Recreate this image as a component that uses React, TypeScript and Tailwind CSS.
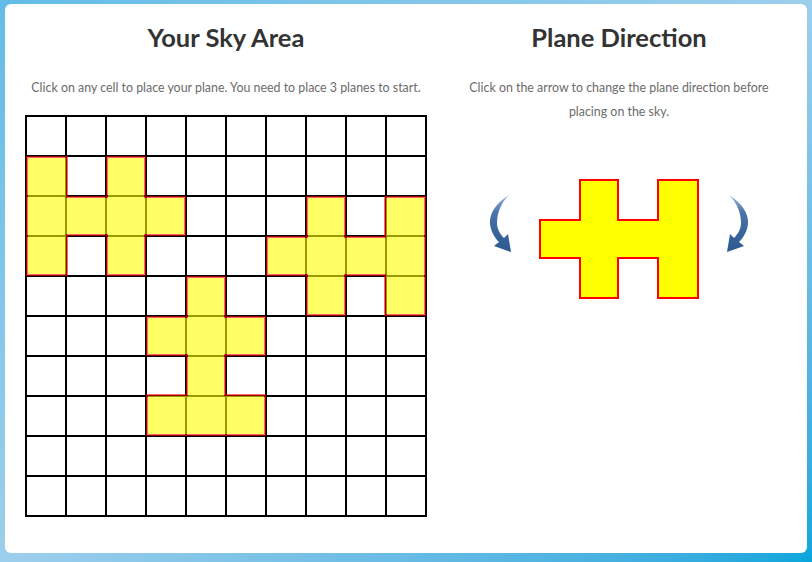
import React from 'react'

type Dir = 'left' | 'right' | 'up'

type Plane = { row: number; col: number; dir: Dir }

const planes: Plane[] = [
    { row: 1, col: 0, dir: 'right' },
    { row: 2, col: 6, dir: 'left' },
    { row: 4, col: 3, dir: 'up' },
]

// nose pointing left, 4 cells wide x 3 cells tall
const sidePoints = '1,41 41,41 41,1 79,1 79,41 119,41 119,1 159,1 159,119 119,119 119,79 79,79 79,119 41,119 41,79 1,79'
// nose pointing up, 3 cells wide x 4 cells tall
const upPoints = '41,1 79,1 79,41 119,41 119,79 79,79 79,119 119,119 119,159 1,159 1,119 41,119 41,79 1,79 1,41 41,41'

const PlaneShape: React.FC<{ dir: Dir; className?: string }> = ({ dir, className }) => {
    const up = dir === 'up'
    return (
        <svg
            width={up ? 120 : 160}
            height={up ? 160 : 120}
            viewBox={up ? '0 0 120 160' : '0 0 160 120'}
            className={className}
            style={dir === 'right' ? { transform: 'scaleX(-1)' } : undefined}
        >
            <polygon points={up ? upPoints : sidePoints} fill="#ffff00" stroke="#ff0000" strokeWidth="2" />
        </svg>
    )
}

const CurvedArrow: React.FC<{ flip?: boolean }> = ({ flip }) => (
    <svg width="24" height="60" viewBox="0 0 24 60" style={flip ? { transform: 'scaleX(-1)' } : undefined}>
        <defs>
            <linearGradient id={flip ? 'arrR' : 'arrL'} x1="0" y1="0" x2="0" y2="1">
                <stop offset="0" stopColor="#9fb8d6" />
                <stop offset="0.3" stopColor="#4a74a9" />
                <stop offset="1" stopColor="#2b5891" />
            </linearGradient>
        </defs>
        <path
            d="M21 1 C 8 9, 1 20, 2 30 C 3 38, 7 44, 11 48 L 6 52 L 23 58 L 20 40 L 16 44 C 12 40, 9 35, 9 29 C 9 19, 13 9, 21 1 Z"
            fill={`url(#${flip ? 'arrR' : 'arrL'})`}
        />
    </svg>
)

export default function App() {
    return (
        <div className="min-h-screen w-full bg-gradient-to-br from-[#62bce8] via-[#9ccfec] to-[#04a6dc] px-[5px] pt-[4px] pb-[9px] font-['Lato',_'Open_Sans',_sans-serif]">
            <div className="flex h-[549px] rounded-[6px] bg-white pl-[20px] pt-[19px]">
                <div className="flex w-[402px] flex-col items-center">
                    <h2 className="text-[25.5px] font-bold leading-[29px] text-[#333333]">Your Sky Area</h2>
                    <p className="mt-[24px] text-[12.4px] leading-[24px] text-[#6b6b6b]">
                        Click on any cell to place your plane. You need to place 3 planes to start.
                    </p>
                    <div className="relative mt-[15px]">
                        <div className="grid grid-cols-10 gap-[2px] bg-black p-[2px]">
                            {Array.from({ length: 100 }).map((_, i) => (
                                <div key={i} className="h-[38px] w-[38px] bg-white" />
                            ))}
                        </div>
                        {planes.map((p, i) => (
                            <div
                                key={i}
                                className="absolute opacity-60"
                                style={{ left: p.col * 40 + 1, top: p.row * 40 + 1 }}
                            >
                                <PlaneShape dir={p.dir} />
                            </div>
                        ))}
                    </div>
                </div>
                <div className="flex flex-1 flex-col items-center pl-[24px] pr-[20px]">
                    <h2 className="text-[25.5px] font-bold leading-[29px] text-[#333333]">Plane Direction</h2>
                    <p className="mt-[24px] max-w-[320px] text-center text-[12.4px] leading-[24px] text-[#6b6b6b]">
                        Click on the arrow to change the plane direction before placing on the sky.
                    </p>
                    <div className="mt-[55px] flex items-start gap-[27px]">
                        <div className="mt-[15px] cursor-pointer">
                            <CurvedArrow />
                        </div>
                        <PlaneShape dir="left" />
                        <div className="mt-[15px] cursor-pointer">
                            <CurvedArrow flip />
                        </div>
                    </div>
                </div>
            </div>
        </div>
    )
}
